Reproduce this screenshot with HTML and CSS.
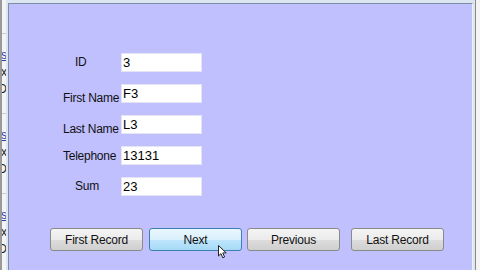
FILE: index.html
```html
<!DOCTYPE html>
<html lang="en">

<head>
    <meta charset="UTF-8">
    <title>Records</title>
    <link rel="stylesheet" href="styles.css">
</head>

<body>
    <div class="side">
        <div class="side-item">
            <div class="side-text">
                <p class="link">Details</p>
                <p>Box</p>
                <p>ID</p>
            </div>
        </div>
        <div class="side-item">
            <div class="side-text">
                <p class="link">Details</p>
                <p>Box</p>
                <p>ID</p>
            </div>
        </div>
        <div class="side-item">
            <div class="side-text">
                <p class="link">Details</p>
                <p>Box</p>
                <p>ID</p>
            </div>
        </div>
    </div>

    <div class="window">
        <div class="panel">
            <div class="form">
                <label class="short">ID</label>
                <input type="text" value="3">
                <label class="low">First Name</label>
                <input type="text" value="F3">
                <label class="low">Last Name</label>
                <input type="text" value="L3">
                <label>Telephone</label>
                <input type="text" value="13131">
                <label class="short">Sum</label>
                <input type="text" value="23">
            </div>

            <div class="buttons">
                <button>First Record</button>
                <button class="hover">Next</button>
                <button>Previous</button>
                <button class="last">Last Record</button>
                <svg class="cursor" width="10" height="14" viewBox="0 0 10 14">
                    <path d="M0.5 0.5 L0.5 11 L3 8.6 L4.8 12.8 L6.6 12 L4.8 7.9 L8.2 7.9 Z" fill="#fff" stroke="#222" stroke-width="1" stroke-linejoin="round" />
                </svg>
            </div>
        </div>
    </div>

    <div class="side-right"></div>
</body>

</html>
```

FILE: styles.css
```css
body {
    margin: 0;
    display: flex;
    height: 270px;
    overflow: hidden;
    background-color: #f2f2f2;
    font-family: "Liberation Sans", Arial, sans-serif;
}

.side {
    width: 4px;
    border-left: 2px solid #9a9a9a;
    background-color: #f4f4f4;
    overflow: hidden;
}

.side-item {
    height: 80px;
    border-top: 1px solid #c8c8c8;
    margin-top: -1px;
}

.side-item:first-child {
    margin-top: 33px;
}

.side-text {
    width: 60px;
    margin-left: -55px;
    padding-top: 14px;
    text-align: right;
    font-size: 12px;
}

.side-text p {
    margin: 0;
    height: 17px;
    color: #222;
}

.side-text .link {
    color: #2a3ca8;
    text-decoration: underline;
}

.window {
    flex: 1;
    background-color: #dce6f3;
    padding: 3px 2px 0 2px;
    display: flex;
}

.panel {
    flex: 1;
    background-color: #c0c0fe;
    border-top: 1px solid #7d8ea3;
    border-left: 1px solid #7d8ea3;
    border-right: 1px solid #eef3fa;
    position: relative;
}

.form {
    display: grid;
    grid-template-columns: 58px 81px;
    grid-auto-rows: 19px;
    row-gap: 12px;
    margin: 49px 0 0 54px;
}

.form label {
    font-size: 12px;
    letter-spacing: -0.25px;
    color: #111;
    align-self: center;
    white-space: nowrap;
}

.form label.short {
    padding-left: 12px;
    margin-top: -2px;
}

.form label.low {
    margin-top: 8px;
}

.form input {
    font-family: "Liberation Sans", Arial, sans-serif;
    font-size: 13px;
    border: 1px solid #e4e4f4;
    background-color: #fff;
    padding: 0 1px;
    margin: 0;
    height: 19px;
    box-sizing: border-box;
    color: #000;
}

.buttons {
    display: flex;
    gap: 5px;
    margin: 32px 0 0 41px;
}

.buttons button {
    width: 93px;
    height: 23px;
    font-family: "Liberation Sans", Arial, sans-serif;
    font-size: 12px;
    letter-spacing: -0.2px;
    color: #111;
    border: 1px solid #8a8a8a;
    border-radius: 3px;
    background: linear-gradient(#f4f4f4 0%, #ebebeb 50%, #dddddd 51%, #cfcfcf 100%);
    padding: 0;
}

.buttons button.hover {
    margin-left: 1px;
    border-color: #3c7fb1;
    background: linear-gradient(#eaf6fd 0%, #d9f0fc 50%, #bee6fd 51%, #a7d9f5 100%);
}

.buttons button.last {
    margin-left: 6px;
}

.cursor {
    position: absolute;
    left: 209px;
    top: 241px;
}

.side-right {
    width: 4px;
    border-left: 1px solid #8a8a8a;
    background-color: #f4f4f4;
}
```
